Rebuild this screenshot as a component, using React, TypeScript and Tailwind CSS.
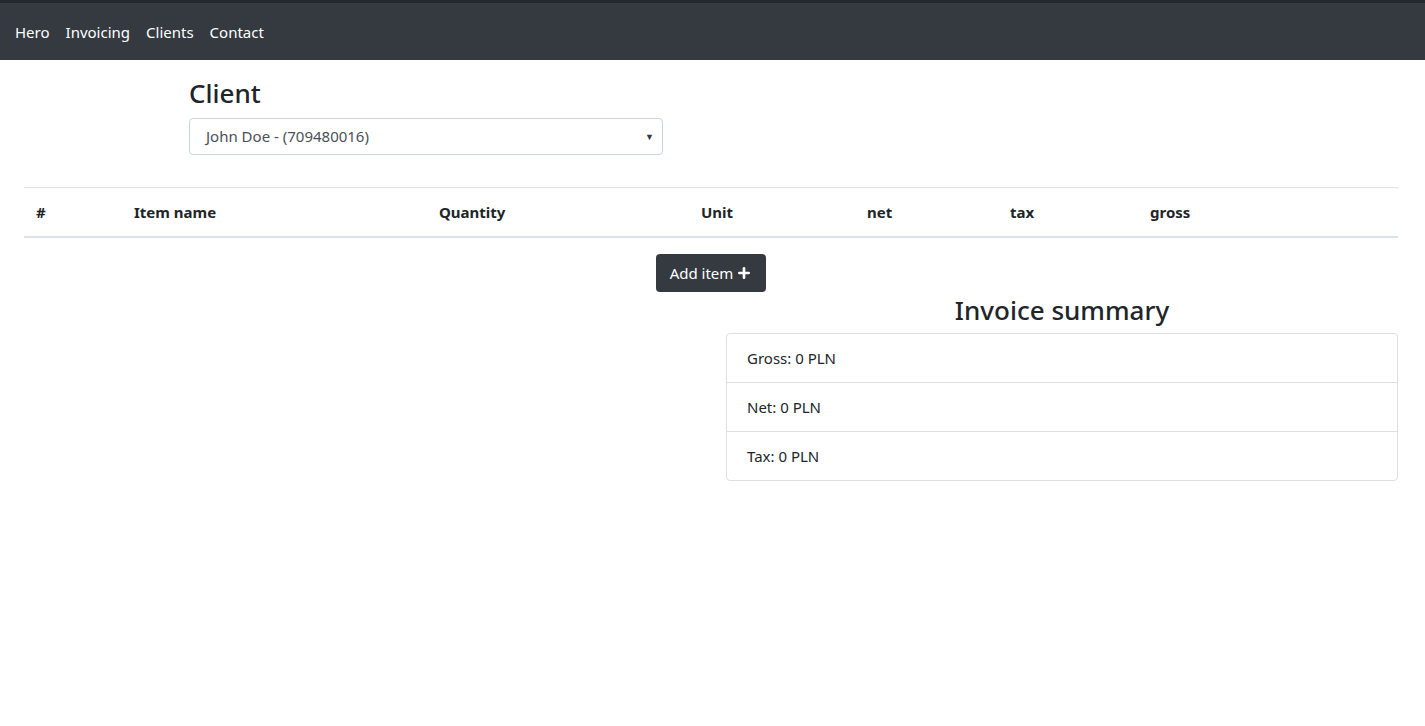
import { Plus } from "lucide-react";

const columns = [
    { label: "#", w: "w-[98px]" },
    { label: "Item name", w: "w-[305px]" },
    { label: "Quantity", w: "w-[262px]" },
    { label: "Unit", w: "w-[166px]" },
    { label: "net", w: "w-[143px]" },
    { label: "tax", w: "w-[140px]" },
    { label: "gross", w: "flex-1" },
];

const summary = ["Gross: 0 PLN", "Net: 0 PLN", "Tax: 0 PLN"];

export default function App() {
    return (
        <div className="min-h-screen bg-white text-[#212529] font-['Noto_Sans',sans-serif] text-[15px]">
            {/* navbar */}
            <nav className="h-[60px] bg-[#343a40] border-t-[3px] border-[#24272b] flex items-center px-[15px] gap-[16px] text-white">
                {["Hero", "Invoicing", "Clients", "Contact"].map((l) => (
                    <a key={l} className="leading-6 pt-[1px]">
                        {l}
                    </a>
                ))}
            </nav>

            <div className="pl-[24px] pr-[27px]">
                {/* client */}
                <div className="ml-[165px] w-[474px] pt-[18px]">
                    <h3 className="text-[26px] font-medium leading-[1.2] mb-[9px]">Client</h3>
                    <div className="relative h-[37px] border border-[#ced4da] rounded-[4px] flex items-center pl-[16px] text-[#495057]">
                        John Doe - (709480016)
                        <span className="absolute right-[8px] top-[11px] text-[9px] text-[#343a40]">▼</span>
                    </div>
                </div>

                {/* table */}
                <div className="mt-[32px] border-t border-[#dee2e6] border-b-2 flex font-bold h-[51px] items-center">
                    {columns.map((c) => (
                        <div key={c.label} className={`${c.w} px-[12px]`}>
                            {c.label}
                        </div>
                    ))}
                </div>

                <div className="flex justify-center mt-[16px]">
                    <button className="h-[38px] w-[110px] justify-center rounded-[4px] bg-[#343a40] text-white flex items-center gap-[3px]">
                        Add item
                        <Plus className="w-[16px] h-[16px]" strokeWidth={4} />
                    </button>
                </div>

                {/* summary */}
                <div className="flex">
                    <div className="w-[702px]" />
                    <div className="flex-1">
                        <h3 className="text-[26px] font-medium leading-[1.2] text-center mt-[3px] mb-[7px]">
                            Invoice summary
                        </h3>
                        <ul className="border border-[#dfdfdf] rounded-[4px]">
                            {summary.map((s, i) => (
                                <li
                                    key={s}
                                    className={`px-[20px] py-[12px] leading-6 ${i > 0 ? "border-t border-[#dfdfdf]" : ""}`}
                                >
                                    {s}
                                </li>
                            ))}
                        </ul>
                    </div>
                </div>
            </div>
        </div>
    );
}
